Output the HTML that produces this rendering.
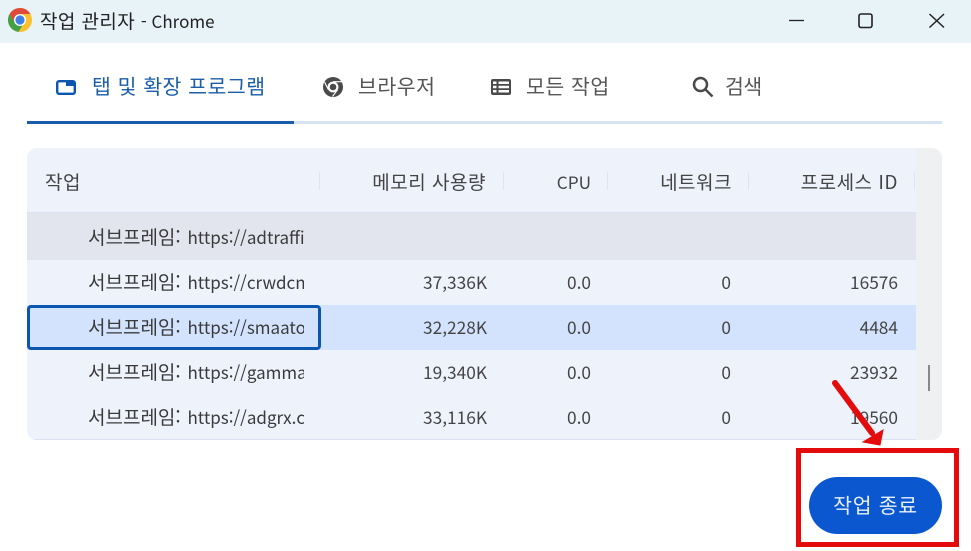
<!DOCTYPE html>
<html lang="ko"><head><meta charset="utf-8"><style>
html,body{margin:0;padding:0;background:#fff}
#p{position:relative;width:971px;height:551px;overflow:hidden;background:#fff;font-family:"Noto Sans CJK KR","Liberation Sans",sans-serif;color:#333}
#p div,#p svg{position:absolute}
.t{white-space:nowrap;line-height:24px;height:24px}
.r{text-align:right;width:200px}
.n{left:88px;width:216px;overflow:hidden;font-size:17px;color:#3a3a3a}
.n b{font-weight:400;font-size:19px;margin-right:2px}
.v{font-size:17.3px;color:#444}
.h{font-size:19px;color:#444;top:170px;letter-spacing:.5px}
.tab{font-size:20.5px;top:73px;letter-spacing:.5px;color:#555}
.sep{width:1px;height:18px;top:172px;background:#dde5f0}
</style></head><body><div id="p">
<div style="left:0;top:0;width:971px;height:43px;background:#e8f3f7"></div>
<svg style="left:8px;top:8px" width="24" height="24" viewBox="0 0 24 24"><circle cx="12" cy="12" r="12" fill="#fbc02d"/><path d="M12 0A12 12 0 0 0 1.600 6L7 15 12 6H22.400A12 12 0 0 0 12 0Z" fill="#e04a3a"/><path d="M1.600 6A12 12 0 0 0 10.500 23.900L16 15 7 15Z" fill="#43a047"/><circle cx="12" cy="12" r="6" fill="#fff"/><circle cx="12" cy="12" r="4.600" fill="#3f7fe8"/></svg>
<div class="t" style="left:40px;top:9px;font-size:19px;color:#222;letter-spacing:.4px">작업 관리자 <span style="font-size:17px;letter-spacing:0">- Chrome</span></div>
<svg style="left:780px;top:0" width="191" height="43" viewBox="0 0 191 43" fill="none" stroke="#222"><path d="M9 20.500H24" stroke-width="1.300"/><rect x="79" y="14" width="13" height="13.500" rx="2" stroke-width="1.600"/><path d="M149.500 14 164 27.500M164 14 149.500 27.500" stroke-width="1.500"/></svg>

<svg style="left:56px;top:80px" width="20" height="15" viewBox="0 0 20 15"><rect x="1.200" y="1.200" width="17.600" height="12.600" rx="2" fill="#fff" stroke="#0b57b0" stroke-width="2.400"/><rect x="10" y="1" width="9" height="5" fill="#0b57b0"/></svg>
<div class="t tab" style="left:92px;color:#1a5eaa">탭 및 확장 프로그램</div>
<svg style="left:323px;top:76.500px" width="20" height="20" viewBox="0 0 20 20"><circle cx="10" cy="10" r="10" fill="#4a4a4a"/><circle cx="10" cy="10" r="5.400" fill="#fff"/><circle cx="10" cy="10" r="3.300" fill="#4a4a4a"/><path d="M10 4.700H19M5.300 12.500 1.500 5M14.500 12.800 9.500 19.500" stroke="#fff" stroke-width="1.100"/></svg>
<div class="t tab" style="left:358px">브라우저</div>
<svg style="left:491px;top:79px" width="20" height="16" viewBox="0 0 20 16"><rect width="20" height="16" rx="2" fill="#4a4a4a"/><path d="M7.500 2.500H18V5H7.500ZM7.500 6.800H18V9.200H7.500ZM7.500 11H18V13.500H7.500ZM2 2.500H5.500V5H2ZM2 6.800H5.500V9.200H2ZM2 11H5.500V13.500H2Z" fill="#fff"/></svg>
<div class="t tab" style="left:526px">모든 작업</div>
<svg style="left:692px;top:76px" width="22" height="22" viewBox="0 0 22 22" fill="none" stroke="#4a4a4a" stroke-width="2.500"><circle cx="8.500" cy="8.500" r="6.500"/><path d="M13 13 20.500 20.500"/></svg>
<div class="t tab" style="left:725px;letter-spacing:-.5px">검색</div>
<div style="left:27px;top:121px;width:915px;height:3px;background:#d5e3f3"></div>
<div style="left:27px;top:121px;width:267px;height:3px;background:#1a5cab"></div>

<div style="left:27px;top:148px;width:915px;height:292px;border-radius:10px;background:#eff0f1;overflow:hidden">
<div style="left:0;top:0;width:889px;height:292px;background:#eef3fb"></div>
<div style="left:0;top:64px;width:889px;height:1px;background:#d8e2f3"></div>
<div style="left:0;top:65px;width:889px;height:47px;background:#e2e5ed"></div>
<div style="left:0;top:157px;width:889px;height:45px;background:#d3e3fd"></div>
<div style="left:0;top:291px;width:889px;height:1px;background:#d8e2f3"></div>
</div>
<div style="left:27px;top:305px;width:288px;height:39px;border:3px solid #0b57b0;border-radius:4px"></div>
<div style="left:928px;top:365px;width:2px;height:26px;background:#888"></div>

<div class="sep" style="left:319px"></div><div class="sep" style="left:503px"></div><div class="sep" style="left:607px"></div><div class="sep" style="left:748px"></div><div class="sep" style="left:914px"></div>
<div class="t h" style="left:45px">작업</div>
<div class="t h r" style="left:286px">메모리 사용량</div>
<div class="t h r" style="left:391px;font-size:17.200px;letter-spacing:0">CPU</div>
<div class="t h r" style="left:532px">네트워크</div>
<div class="t h r" style="left:698px">프로세스 ID</div>

<div class="t n" style="top:225px"><b>서브프레임:</b> https://adtraffic</div>
<div class="t n" style="top:270px"><b>서브프레임:</b> https://crwdcntrl</div>
<div class="t n" style="top:315px"><b>서브프레임:</b> https://smaato</div>
<div class="t n" style="top:360px"><b>서브프레임:</b> https://gammaplatform</div>
<div class="t n" style="top:405px"><b>서브프레임:</b> https://adgrx.com</div>

<div class="t v r" style="left:287px;top:270px">37,336K</div><div class="t v r" style="left:391px;top:270px">0.0</div><div class="t v r" style="left:531px;top:270px">0</div><div class="t v r" style="left:698px;top:270px">16576</div>
<div class="t v r" style="left:287px;top:315px">32,228K</div><div class="t v r" style="left:391px;top:315px">0.0</div><div class="t v r" style="left:531px;top:315px">0</div><div class="t v r" style="left:698px;top:315px">4484</div>
<div class="t v r" style="left:287px;top:360px">19,340K</div><div class="t v r" style="left:391px;top:360px">0.0</div><div class="t v r" style="left:531px;top:360px">0</div><div class="t v r" style="left:698px;top:360px">23932</div>
<div class="t v r" style="left:287px;top:405px">33,116K</div><div class="t v r" style="left:391px;top:405px">0.0</div><div class="t v r" style="left:531px;top:405px">0</div><div class="t v r" style="left:698px;top:405px">19560</div>

<svg style="left:825px;top:375px" width="65" height="75" viewBox="0 0 65 75"><path d="M10 8 47 58" stroke="#e30b0b" stroke-width="6" stroke-linecap="round" fill="none"/><path d="M58 55 55 70 38 67Z" fill="#e30b0b" stroke="#e30b0b" stroke-width="1"/></svg>
<div style="left:796px;top:448px;width:153px;height:89px;border:5px solid #e30b0b"></div>
<div class="t" style="left:809px;top:477px;width:133px;height:57px;line-height:55px;border-radius:29px;background:#0b57d0;color:#e8f0fc;font-size:20.5px;letter-spacing:.7px;text-align:center">작업 종료</div>
</div></body></html>
